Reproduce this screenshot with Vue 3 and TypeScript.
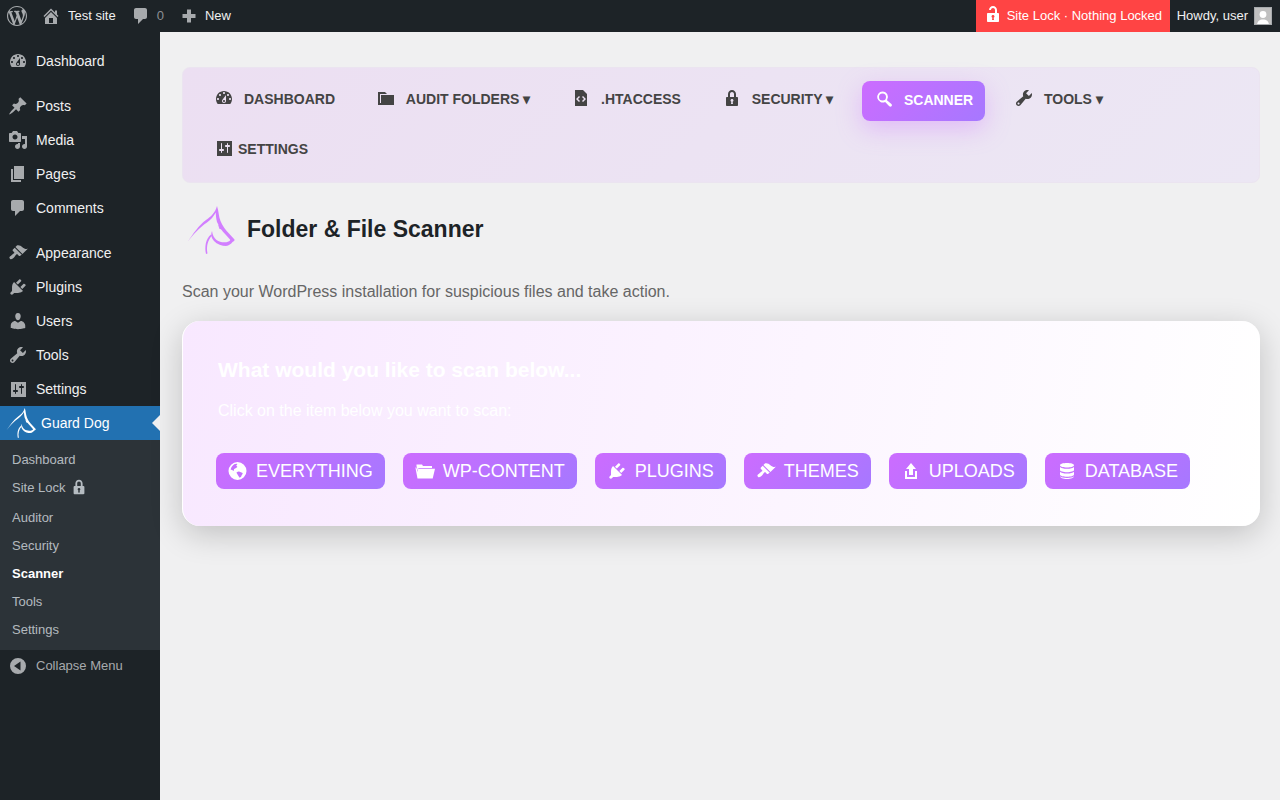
<script setup lang="ts">
const icons: Record<string, string> = {
  dashboard:
    'M3.76 16h12.48c1.1-1.37 1.76-3.11 1.76-5 0-4.42-3.58-8-8-8s-8 3.58-8 8c0 1.89.66 3.63 1.76 5zM10 4c.55 0 1 .45 1 1s-.45 1-1 1-1-.45-1-1 .45-1 1-1zM6 6c.55 0 1 .45 1 1s-.45 1-1 1-1-.45-1-1 .45-1 1-1zm8 0c.55 0 1 .45 1 1s-.45 1-1 1-1-.45-1-1 .45-1 1-1zm-5.37 5.55L12 7v6c0 1.1-.9 2-2 2s-2-.9-2-2c0-.57.24-1.08.63-1.45zM4 10c.55 0 1 .45 1 1s-.45 1-1 1-1-.45-1-1 .45-1 1-1zm12 0c.55 0 1 .45 1 1s-.45 1-1 1-1-.45-1-1 .45-1 1-1zm-5 3c0-.55-.45-1-1-1s-1 .45-1 1 .45 1 1 1 1-.45 1-1z',
  pin: 'M10.44 3.02l1.82-1.82 6.36 6.35-1.83 1.82c-1.05-.68-2.48-.57-3.41.36l-.75.75c-.92.93-1.04 2.35-.35 3.41l-1.83 1.82-2.41-2.41-2.8 2.79c-.42.42-3.38 2.71-3.8 2.29s1.86-3.39 2.28-3.81l2.79-2.79L4.1 9.36l1.83-1.82c1.05.69 2.48.57 3.4-.36l.75-.75c.93-.92 1.05-2.35.36-3.41z',
  media:
    'M13 11V4c0-.55-.45-1-1-1h-1.67L9 1H5L3.67 3H2c-.55 0-1 .45-1 1v7c0 .55.45 1 1 1h10c.55 0 1-.45 1-1zM7 4.5c1.38 0 2.5 1.12 2.5 2.5S8.38 9.5 7 9.5 4.5 8.38 4.5 7 5.62 4.5 7 4.5zM14 6h5v10.5c0 1.38-1.12 2.5-2.5 2.5S14 17.88 14 16.5s1.12-2.5 2.5-2.5c.17 0 .34.02.5.05V9h-3V6zm-4 8.05V13h2v3.5c0 1.38-1.12 2.5-2.5 2.5S7 17.88 7 16.5 8.12 14 9.5 14c.17 0 .34.02.5.05z',
  page: 'M6 15V2h10v13H6zm-1 1h8v2H3V5h2v11z',
  comment: 'M5 2h9c1.1 0 2 .9 2 2v7c0 1.1-.9 2-2 2h-2l-5 5v-5H5c-1.1 0-2-.9-2-2V4c0-1.1.9-2 2-2z',
  brush:
    'M14.48 11.06L7.41 3.99l1.5-1.5c.5-.56 2.3-.47 3.51.32 1.21.8 1.43 1.28 2.91 2.1 1.18.64 2.45 1.26 4.45.85zm-.71.71L6.7 4.7 4.93 6.47c-.39.39-.39 1.02 0 1.41l1.06 1.06c.39.39.39 1.03 0 1.42-.6.6-1.43 1.11-2.21 1.69-.35.26-.7.53-1.01.84C1.43 13.23.96 14.73 1.92 15.69s2.46.49 3.83-.89c.31-.31.58-.66.84-1.01.58-.78 1.09-1.61 1.69-2.21.39-.39 1.02-.39 1.41 0l1.06 1.06c.39.39 1.02.39 1.41 0z',
  plugin:
    'M13.11 4.36L9.87 7.6 8 5.73l3.24-3.24c.35-.34 1.05-.2 1.56.32.52.51.66 1.21.31 1.55zm-8 1.77l.91-1.12 9.01 9.01-1.19.84c-.71.71-2.63 1.16-3.82 1.16H6.14L4.9 17.26c-.59.59-1.54.59-2.12 0-.59-.58-.59-1.53 0-2.12l1.24-1.24v-3.88c0-1.13.4-3.19 1.09-3.89zm7.26 3.97l3.24-3.24c.34-.35 1.04-.21 1.55.31.52.51.66 1.21.31 1.55l-3.24 3.25z',
  user: 'M10 9.25c-2.27 0-2.73-3.44-2.73-3.44C7 4.02 7.82 2 9.97 2c2.16 0 2.98 2.02 2.71 3.81 0 0-.41 3.44-2.68 3.44zm0 2.57L12.72 10c2.39 0 4.52 2.33 4.52 4.53v2.49s-3.65 1.13-7.24 1.13c-3.65 0-7.24-1.13-7.24-1.13v-2.49c0-2.25 1.94-4.48 4.47-4.48z',
  tool: 'M16.68 9.77c-1.34 1.34-3.3 1.67-4.95.99l-5.41 6.52c-.99.99-2.59.99-3.58 0s-.99-2.59 0-3.57l6.52-5.42c-.68-1.65-.35-3.61.99-4.95 1.28-1.28 3.12-1.62 4.72-1.06l-2.89 2.89 2.82 2.82 2.86-2.87c.53 1.58.18 3.4-1.08 4.65zM3.81 16.21c.4.39 1.03.39 1.42 0 .4-.4.4-1.03 0-1.43-.39-.39-1.02-.39-1.42 0-.39.4-.39 1.03 0 1.43z',
  settings:
    'M3 3h15v15H3zM8 11h1c.55 0 1 .45 1 1s-.45 1-1 1H8v1.500c0 .28-.22.5-.5.5s-.5-.22-.5-.5V13H6c-.55 0-1-.45-1-1s.45-1 1-1h1V5.500c0-.28.22-.5.5-.5s.5.22.5.5V11zm5-2h-1c-.55 0-1-.45-1-1s.45-1 1-1h1V5.500c0-.28.22-.5.5-.5s.5.22.5.5V7h1c.55 0 1 .45 1 1s-.45 1-1 1h-1v5.500c0 .28-.22.5-.5.5s-.5-.22-.5-.5V9z',
  folder: 'M5 7h13v10H2V4h7l2 2H4v9h1V7z',
  code: 'M12 2l4 4v12H4V2h8zM9 13l-2-2 2-2-1-1-3 3 3 3zm3 1l3-3-3-3-1 1 2 2-2 2z',
  lock: 'M14 9h1c.55 0 1 .45 1 1v7c0 .55-.45 1-1 1H5c-.55 0-1-.45-1-1v-7c0-.55.45-1 1-1h1V6c0-2.21 1.79-4 4-4s4 1.79 4 4v3zm-2 0V6c0-1.1-.9-2-2-2s-2 .9-2 2v3h4zm-1 7l-.36-2.15c.51-.24.86-.75.86-1.35 0-.83-.67-1.5-1.500-1.500s-1.500.67-1.500 1.500c0 .6.35 1.11.86 1.35L9 16h2z',
  unlock:
    'M12 9V6c0-1.1-.9-2-2-2s-2 .9-2 2H6c0-2.21 1.79-4 4-4s4 1.79 4 4v3h1c.55 0 1 .45 1 1v7c0 .55-.45 1-1 1H5c-.55 0-1-.45-1-1v-7c0-.55.45-1 1-1h7zm-1 7l-.36-2.15c.51-.24.86-.75.86-1.35 0-.83-.67-1.5-1.500-1.500s-1.500.67-1.500 1.500c0 .6.35 1.11.86 1.35L9 16h2z',
  search:
    'M8.500 2.500a5.500 5.500 0 0 1 4.470 8.700l4.400 3.900c.7.7.7 1.600.1 2.200s-1.500.5-2.200-.1l-4.100-4.300A5.500 5.500 0 1 1 8.500 2.500zm0 2a3.500 3.500 0 1 0 0 7 3.500 3.500 0 0 0 0-7z',
  globe:
    'M9.500 1a9 9 0 1 0 0 18 9 9 0 0 0 0-18zM5.700 3.400c1-.5 2.300-.8 3.400-.7.3.5 0 1-.5 1.300-.5.4-.2 1 .3 1.200.5.3.5 1-.1 1.300-.7.3-1 .9-1.600 1.100-.8.2-1.400.8-1.300 1.600.1.600-.6.700-1 .3-.6-.5-1.500-.8-2.200-.6.100-2.300 1.500-4.200 4-5.800zM11 10.500c1 .1 1.600.9 2.500.9 1 .1 1.500.9 1 1.700-.4.800-1 1.100-1.100 2-.1.700-.8 1.400-1.500 1.500-.7.100-1-.5-1.100-1.100-.1-.7-.9-1.100-1.100-1.800-.2-.7-.9-1-1.100-1.600-.2-.700.5-1.200 1.200-1.300.6-.1 1.100-.3 1.700-.3z',
  open: 'M1.500 3.500h5.500l1 1.500h9V7H3.500L2.700 9.500 1.500 5zM3 7.800h17l-2.300 9.700H2.500L.4 6.500l.9 0L3 11z',
  upload: 'M8 14V8H5l5-6 5 6h-3v6H8zm-2 2v-6H4v8h12.010v-8H14v6H6z',
  database:
    'M10 2c3.860 0 7 .9 7 2.200S13.860 6.500 10 6.500 3 5.500 3 4.200 6.140 2 10 2zM3 6c1 1.100 3.700 1.800 7 1.800s6-.7 7-1.800v3c0 1.300-3.140 2.200-7 2.200S3 10.300 3 9zM3 10.800c1 1.100 3.700 1.800 7 1.800s6-.7 7-1.800V13.500c0 1.300-3.140 2.300-7 2.300s-7-1-7-2.300zM3 15.300c1 1.100 3.700 1.700 7 1.700s6-.6 7-1.700c0 1.500-3.140 2.700-7 2.700s-7-1.200-7-2.700z',
  collapse: 'M10 2a8 8 0 1 0 0 16 8 8 0 0 0 0-16zM12.500 5.500v9L6 10z',
  wp: 'M20 10c0-5.510-4.490-10-10-10C4.480 0 0 4.490 0 10c0 5.520 4.480 10 10 10 5.510 0 10-4.480 10-10zM7.780 15.370L4.370 6.220c.55-.02 1.170-.08 1.170-.08.5-.06.44-1.130-.06-1.110 0 0-1.450.11-2.370.11-.18 0-.37 0-.58-.01C4.120 2.690 6.870 1.110 10 1.110c2.330 0 4.450.87 6.050 2.340-.68-.11-1.650.39-1.650 1.580 0 .74.45 1.360.9 2.100.35.61.55 1.360.55 2.460 0 1.490-1.400 5-1.400 5l-3.030-8.370c.54-.02.82-.17.82-.17.5-.05.44-1.250-.06-1.220 0 0-1.440.12-2.380.12-.87 0-2.330-.12-2.330-.12-.5-.03-.56 1.200-.06 1.220l.92.08 1.260 3.410zM17.410 10c.24-.64.74-1.870.43-4.250.7 1.290 1.050 2.710 1.050 4.250 0 3.290-1.730 6.240-4.400 7.780.97-2.590 1.940-5.200 2.920-7.780zM6.100 18.090C3.120 16.650 1.110 13.530 1.110 10c0-1.300.23-2.480.72-3.590C3.250 10.300 4.670 14.200 6.100 18.090zm4.030-6.630l2.580 6.980c-.86.29-1.760.45-2.710.45-.79 0-1.570-.11-2.290-.33.81-2.380 1.620-4.730 2.420-7.100z',
  home: 'M16 8.500l1.530 1.530-1.060 1.060L10 4.620l-6.470 6.470-1.060-1.060L10 2.500l4 4v-2h2v4zm-6-2.460l6 5.990V18H4v-5.970zM12 17v-5H8v5h4z',
  plus: 'M16.500 8v4h-4.500v4.500H8V12H3.500V8H8V3.500h4V8h4.500z',
}

const menuGroups = [
  [{ label: 'Dashboard', icon: 'dashboard' }],
  [
    { label: 'Posts', icon: 'pin' },
    { label: 'Media', icon: 'media' },
    { label: 'Pages', icon: 'page' },
    { label: 'Comments', icon: 'comment' },
  ],
  [
    { label: 'Appearance', icon: 'brush' },
    { label: 'Plugins', icon: 'plugin' },
    { label: 'Users', icon: 'user' },
    { label: 'Tools', icon: 'tool' },
    { label: 'Settings', icon: 'settings' },
  ],
]

const subMenu = ['Dashboard', 'Site Lock', 'Auditor', 'Security', 'Scanner', 'Tools', 'Settings']

const navItems = [
  { label: 'Dashboard', icon: 'dashboard' },
  { label: 'Audit Folders ▾', icon: 'folder' },
  { label: '.htaccess', icon: 'code' },
  { label: 'Security ▾', icon: 'lock' },
  { label: 'Scanner', icon: 'search', active: true },
  { label: 'Tools ▾', icon: 'tool' },
  { label: 'Settings', icon: 'settings', tight: true },
]

const scanTargets = [
  { label: 'Everything', icon: 'globe' },
  { label: 'wp-content', icon: 'open' },
  { label: 'Plugins', icon: 'plugin' },
  { label: 'Themes', icon: 'brush' },
  { label: 'Uploads', icon: 'upload' },
  { label: 'Database', icon: 'database' },
]
</script>

<template>
  <div class="page">
    <svg width="0" height="0" class="defs">
      <symbol id="dog" viewBox="0 0 48 48">
        <path d="M.5 36C6 28 12 19 19 14C24 10.500 28 7 30 0 32 6 31.500 10 33.500 15 35.500 20 38.500 24 42 27.500L47.500 33.500C48 34.500 46.500 35.500 45.500 36 44 38 42 39.500 39 40 35 40 30 38.500 27 35 24.500 32 23.500 29 25 25 25.500 29 27 32 29.500 34 33 36.500 38 37 41.500 35.500 43 35 43.500 34 43 33.500L38.500 28.500C35 25 32 20.500 30 16 29 12 28.800 9 28.800 6.500 26.500 10.500 24 13.500 20 16.500 13 21 6 28.500 .5 36Z" />
        <path d="M25 29.500C21 34 19 40 20.500 47.500L19 48C17.500 41 18.500 33 24 28.500Z" />
        <path d="M31 18.500L36.500 23.500 32.500 23Z" />
      </symbol>
    </svg>

    <header class="adminbar">
      <div class="bar-left">
        <svg class="bar-wp" viewBox="0 0 20 20"><path :d="icons.wp" fill-rule="evenodd" /></svg>
        <div class="bar-item">
          <svg class="bar-icon" viewBox="0 0 20 20"><path :d="icons.home" fill-rule="evenodd" /></svg>
          <span>Test site</span>
        </div>
        <div class="bar-item">
          <svg class="bar-icon" viewBox="0 0 20 20"><path :d="icons.comment" /></svg>
          <span class="count">0</span>
        </div>
        <div class="bar-item">
          <svg class="bar-icon" viewBox="0 0 20 20"><path :d="icons.plus" /></svg>
          <span>New</span>
        </div>
      </div>
      <div class="bar-right">
        <div class="site-lock">
          <svg viewBox="0 0 20 20"><path :d="icons.unlock" fill-rule="evenodd" /></svg>
          <span>Site Lock · Nothing Locked</span>
        </div>
        <div class="howdy">
          <span>Howdy, user</span>
          <svg class="avatar" viewBox="0 0 18 18">
            <rect width="18" height="18" fill="#c0c0c0" />
            <circle cx="9" cy="7.500" r="3.400" fill="#fff" />
            <path d="M3 18c.4-4 2.600-5.500 6-5.500s5.600 1.500 6 5.500z" fill="#fff" />
            <rect x=".5" y=".5" width="17" height="17" fill="none" stroke="#a7aaad" />
          </svg>
        </div>
      </div>
    </header>

    <div class="shell">
      <aside class="sidebar">
        <ul v-for="(group, g) in menuGroups" :key="g" class="menu-group">
          <li v-for="item in group" :key="item.label" class="menu-item">
            <svg viewBox="0 0 20 20"><path :d="icons[item.icon]" fill-rule="evenodd" /></svg>
            <span>{{ item.label }}</span>
          </li>
        </ul>
        <div class="menu-active">
          <svg class="dog-small"><use href="#dog" /></svg>
          <span>Guard Dog</span>
        </div>
        <ul class="submenu">
          <li
            v-for="sub in subMenu"
            :key="sub"
            :class="{ current: sub === 'Scanner', locked: sub === 'Site Lock' }"
          >
            <span>{{ sub }}</span>
            <svg v-if="sub === 'Site Lock'" viewBox="0 0 20 20"><path :d="icons.lock" fill-rule="evenodd" /></svg>
          </li>
        </ul>
        <div class="collapse">
          <svg viewBox="0 0 20 20"><path :d="icons.collapse" fill-rule="evenodd" /></svg>
          <span>Collapse Menu</span>
        </div>
      </aside>

      <main class="content">
        <nav class="plugin-nav">
          <a
            v-for="item in navItems"
            :key="item.label"
            class="nav-link"
            :class="{ active: item.active, tight: item.tight }"
          >
            <svg viewBox="0 0 20 20"><path :d="icons[item.icon]" fill-rule="evenodd" /></svg>
            <span>{{ item.label }}</span>
          </a>
        </nav>

        <div class="title-row">
          <svg class="dog-large"><use href="#dog" /></svg>
          <h1>Folder &amp; File Scanner</h1>
        </div>
        <p class="intro">Scan your WordPress installation for suspicious files and take action.</p>

        <section class="card">
          <h2>What would you like to scan below...</h2>
          <p>Click on the item below you want to scan:</p>
          <div class="scan-buttons">
            <button v-for="target in scanTargets" :key="target.label" class="scan-btn">
              <svg viewBox="0 0 20 20"><path :d="icons[target.icon]" fill-rule="evenodd" /></svg>
              <span>{{ target.label }}</span>
            </button>
          </div>
        </section>
      </main>
    </div>
  </div>
</template>

<style>
html,
body {
  margin: 0;
  background: #f0f0f1;
}
</style>

<style scoped>
.page {
  height: 800px;
  display: flex;
  flex-direction: column;
  overflow: hidden;
  font-family: "Liberation Sans", Arial, sans-serif;
  background: #f0f0f1;
}

.defs {
  position: absolute;
}

svg {
  fill: currentColor;
  flex-shrink: 0;
}

/* admin bar */
.adminbar {
  height: 32px;
  flex-shrink: 0;
  display: flex;
  justify-content: space-between;
  background: #1d2327;
  color: #f0f0f1;
  font-size: 13px;
}

.adminbar span {
  margin-top: -1px;
}

.bar-left,
.bar-item,
.howdy,
.site-lock {
  display: flex;
  align-items: center;
}

.bar-right {
  display: flex;
}

.bar-wp {
  width: 20px;
  height: 20px;
  margin: 0 14px 0 7px;
  color: #a7aaad;
}

.bar-item {
  margin-right: 15px;
}

.bar-icon {
  width: 20px;
  height: 20px;
  margin-right: 7px;
  color: #a7aaad;
}

.bar-item:nth-of-type(n + 2) .bar-icon {
  margin-right: 6px;
}

.count {
  color: #8c8f94;
}

.site-lock {
  width: 194px;
  box-sizing: border-box;
  padding-left: 7px;
  background: #ff4444;
  color: #fff;
}

.site-lock svg {
  width: 20px;
  height: 20px;
  margin-right: 4px;
  margin-top: -4px;
}

.howdy {
  padding: 0 8px 0 7px;
}

.avatar {
  width: 18px;
  height: 18px;
  margin-left: 6px;
}

/* sidebar */
.shell {
  flex: 1;
  display: flex;
  min-height: 0;
}

.sidebar {
  width: 160px;
  flex-shrink: 0;
  background: #1d2327;
  padding-top: 12px;
  color: #f0f0f1;
  font-size: 14px;
}

.menu-group {
  list-style: none;
  margin: 0;
  padding: 0;
}

.menu-group + .menu-group {
  margin-top: 11px;
}

.menu-item {
  height: 34px;
  display: flex;
  align-items: center;
  padding-left: 8px;
}

.menu-item svg {
  width: 20px;
  height: 20px;
  margin-right: 8px;
  color: #a7aaad;
}

.menu-active {
  position: relative;
  height: 34px;
  display: flex;
  align-items: center;
  padding-left: 6px;
  background: #2271b1;
  color: #fff;
}

.menu-active::after {
  content: "";
  position: absolute;
  right: 0;
  top: 9px;
  border: 8px solid transparent;
  border-right-color: #f0f0f1;
}

.dog-small {
  width: 30px;
  height: 30px;
  margin-right: 5px;
  color: #fff;
}

.submenu {
  list-style: none;
  margin: 0;
  padding: 5px 0 7px;
  background: #2c3338;
  font-size: 13px;
  color: rgba(240, 246, 252, 0.7);
}

.submenu li {
  height: 28px;
  display: flex;
  align-items: center;
  padding-left: 12px;
}

.submenu li.locked {
  height: 30px;
  padding-bottom: 2px;
  box-sizing: border-box;
}

.submenu li svg {
  width: 18px;
  height: 18px;
  margin-left: 5px;
}

.submenu li.current {
  color: #fff;
  font-weight: 700;
}

.collapse {
  display: flex;
  align-items: center;
  height: 32px;
  padding-left: 8px;
  font-size: 13px;
  color: #a7aaad;
}

.collapse span {
  margin-top: -2px;
}

.collapse svg {
  width: 20px;
  height: 20px;
  margin-right: 8px;
}

/* main area */
.content {
  flex: 1;
  min-width: 0;
  padding: 35px 20px 0 22px;
}

.plugin-nav {
  display: flex;
  flex-wrap: wrap;
  gap: 10px 16.800px;
  box-sizing: border-box;
  height: 116px;
  padding: 13px 19px;
  border-radius: 8px;
  background: linear-gradient(135deg, #ecdff2, #ece7f4);
  border: 1px solid #ebe4f0;
  align-content: flex-start;
}

.nav-link {
  height: 40px;
  box-sizing: border-box;
  display: flex;
  align-items: center;
  padding: 0 12px 4px;
  border-radius: 8px;
  color: #444;
  font-size: 14px;
  font-weight: 700;
  text-transform: uppercase;
}

.nav-link svg {
  width: 20px;
  height: 20px;
  margin-right: 10px;
  margin-top: -2px;
}

.nav-link.tight svg {
  margin-right: 4px;
}

.nav-link.active {
  padding-bottom: 2px;
  color: #fff;
  background: linear-gradient(135deg, #cc6cff, #a678ff);
  box-shadow: 0 8px 24px rgba(204, 108, 255, 0.35);
}

.title-row {
  display: flex;
  align-items: center;
  margin-top: 23px;
  padding-left: 5px;
}

.dog-large {
  width: 48px;
  height: 48px;
  margin-right: 12px;
  color: #d27fff;
}

h1 {
  margin: 0 0 2px;
  font-size: 23px;
  font-weight: 700;
  color: #1d2327;
}

.intro {
  margin: 28px 0 19px;
  font-size: 16px;
  line-height: 20px;
  color: #666;
}

.card {
  box-sizing: border-box;
  height: 205px;
  padding: 36px 36px 0 35px;
  border-radius: 18px;
  border-left: 1px solid #fff;
  background: linear-gradient(100deg, #f8e8ff, #fff);
  box-shadow: 0 8px 32px rgba(0, 0, 0, 0.2);
  color: #fff;
}

.card h2 {
  margin: 0;
  font-size: 21px;
  line-height: 26px;
  font-weight: 700;
}

.card p {
  margin: 18px 0 0;
  font-size: 16px;
  line-height: 20px;
}

.scan-buttons {
  display: flex;
  gap: 18px;
  margin: 32px 0 0 -2px;
}

.scan-btn {
  height: 36px;
  display: flex;
  align-items: center;
  padding: 0 12px;
  border: 0;
  border-radius: 8px;
  background: linear-gradient(135deg, #cc6cff, #a678ff);
  color: #fff;
  font-family: inherit;
  font-size: 18px;
  text-transform: uppercase;
}

.scan-btn svg {
  width: 20px;
  height: 20px;
  margin-right: 8px;
}
</style>
